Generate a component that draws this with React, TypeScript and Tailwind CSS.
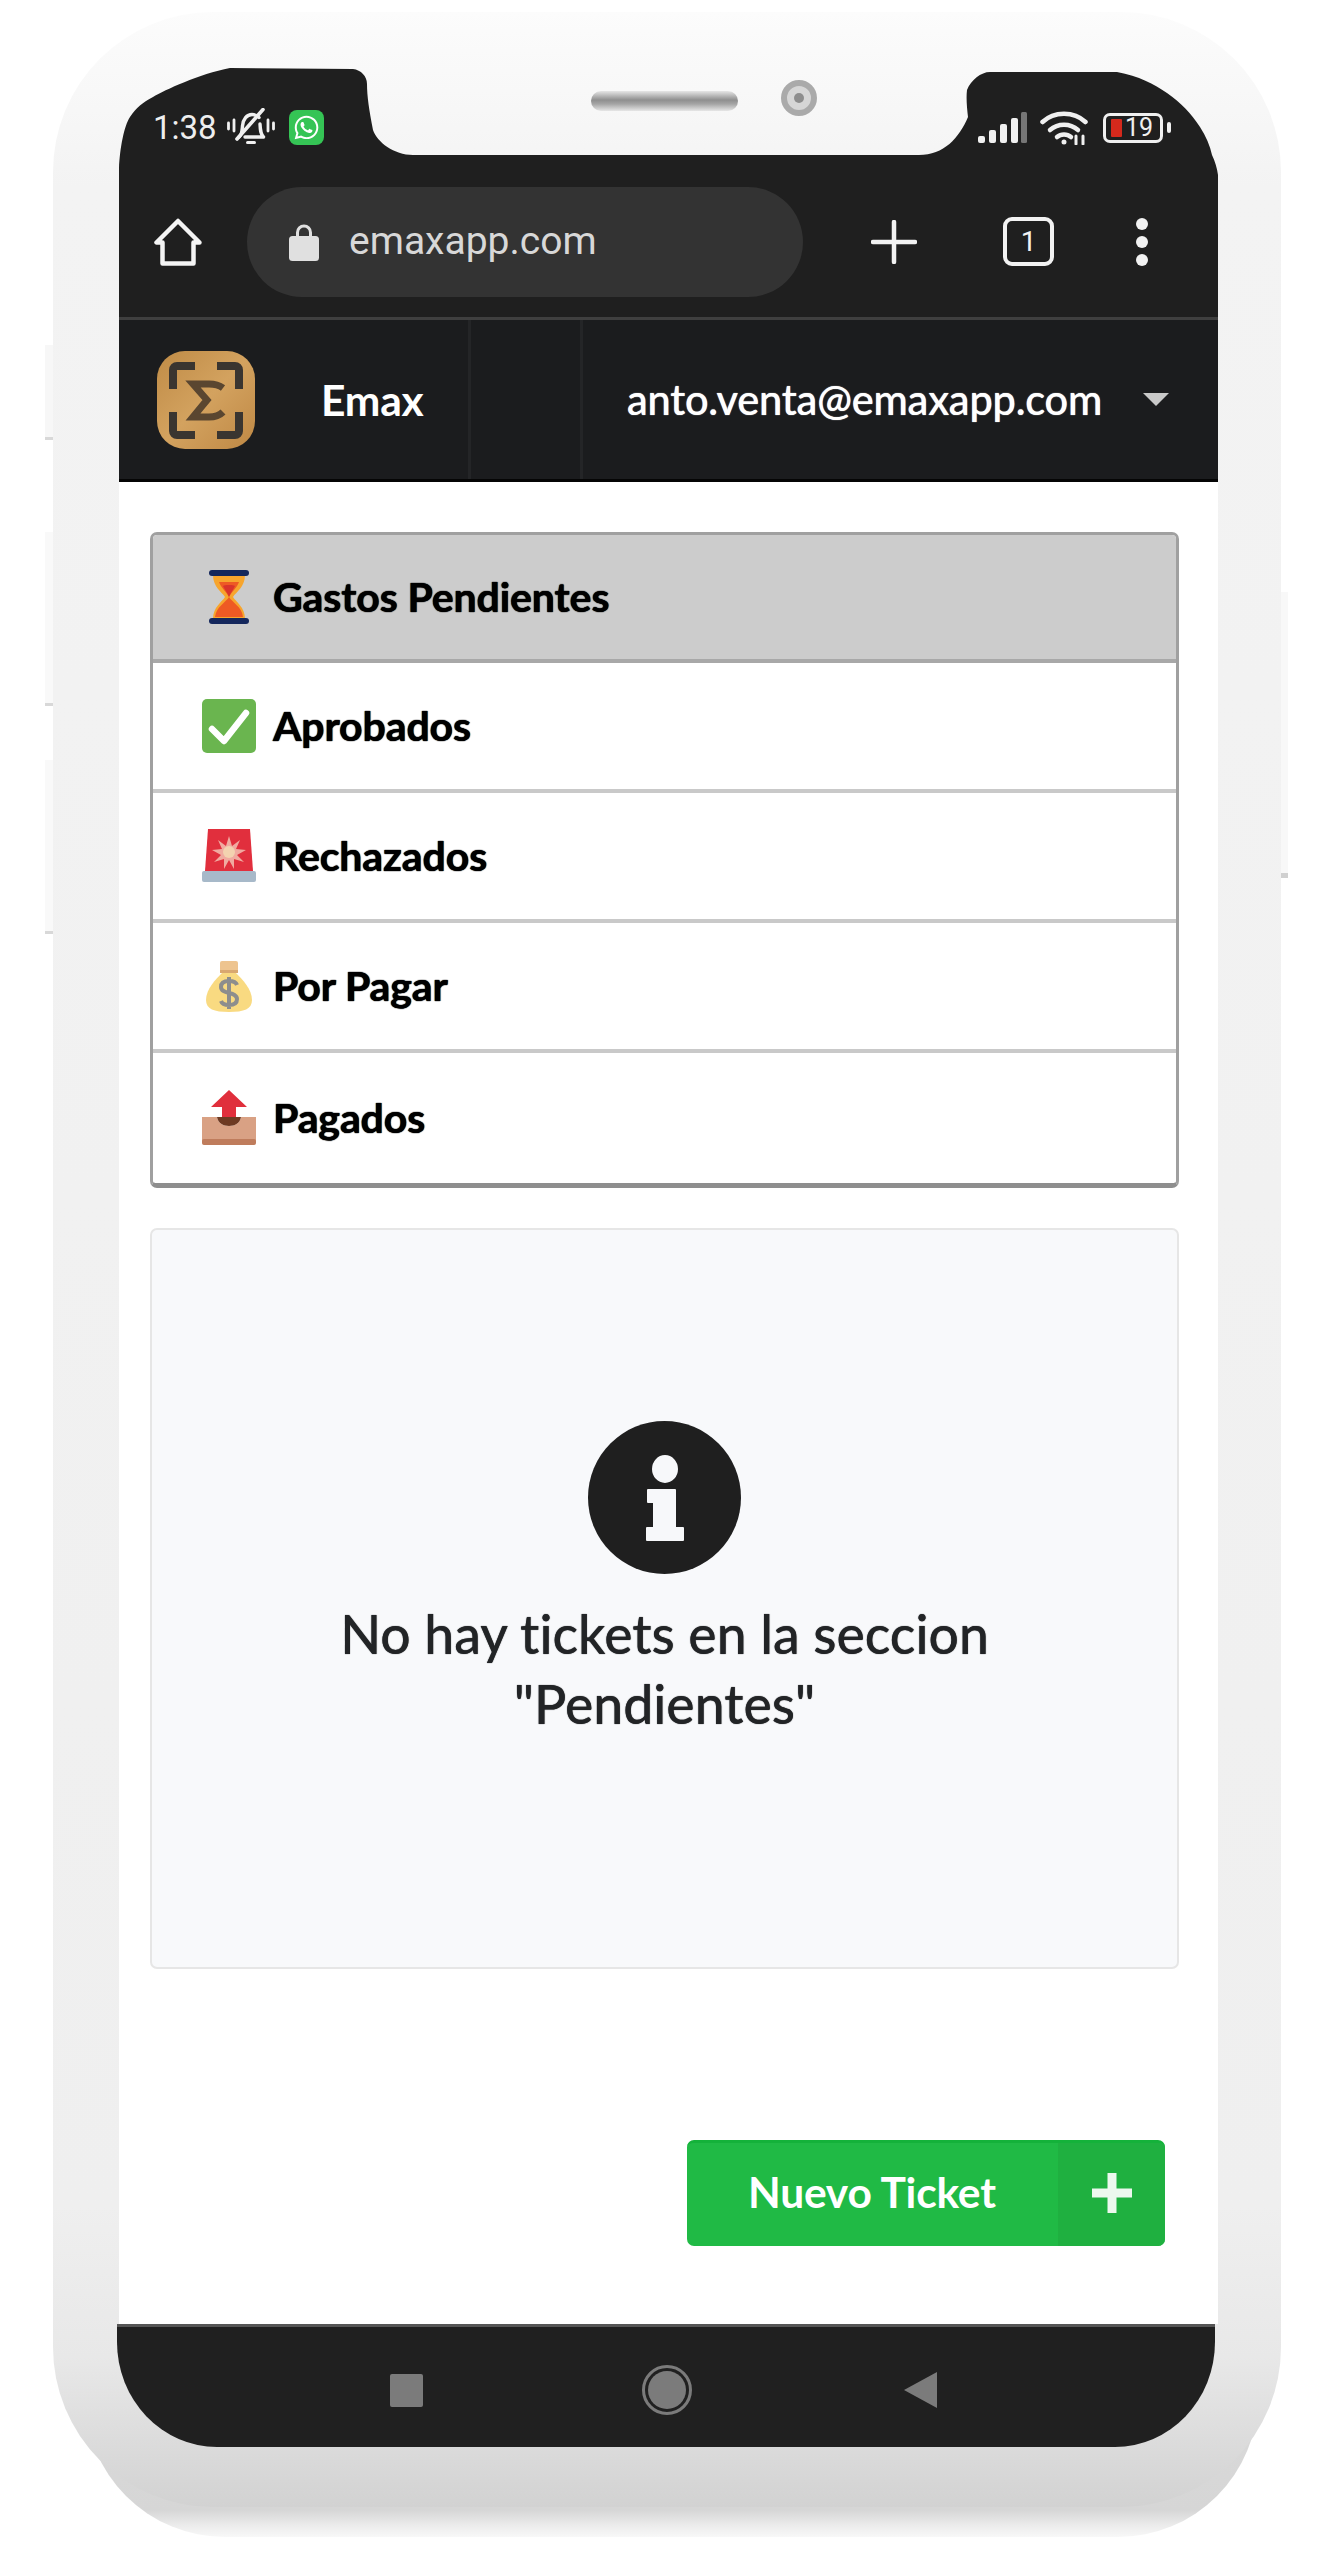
import React from "react";
import { FaWhatsapp } from "react-icons/fa";

function MutedBell() {
  return (
    <svg viewBox="0 0 48 38" className="w-[48px] h-[38px]" fill="none" stroke="#f0f0f0" strokeWidth="3.4" strokeLinecap="round" strokeLinejoin="round">
      <path d="M1.500 15v6M7 12v11M41 12v11M46.500 15v6" strokeWidth="2.800" />
      <path d="M12 29c3-2 3-6 3.500-11C16 11 20 6.500 25 6.500c3 0 5.500 1.200 7 3" />
      <path d="M33 16c.3 6 .5 10 3.500 13H18" />
      <path d="M10 31 36 1.500" strokeWidth="3.600" />
      <path d="M20.500 34.500h7" strokeWidth="3" />
    </svg>
  );
}

function Signal() {
  return (
    <svg viewBox="0 0 50 31" className="w-[50px] h-[31px]">
      <rect x="0" y="24" width="7" height="7" rx="2" fill="#f0f0f0" />
      <rect x="11" y="18" width="7" height="13" rx="2" fill="#f0f0f0" />
      <rect x="22" y="12" width="7" height="19" rx="2" fill="#f0f0f0" />
      <rect x="33" y="6" width="7" height="25" rx="2" fill="#f0f0f0" />
      <rect x="43" y="0" width="6" height="31" rx="1.500" fill="#767676" />
    </svg>
  );
}

function Wifi() {
  return (
    <svg viewBox="0 0 48 34" className="w-[48px] h-[34px]" fill="none" stroke="#f0f0f0" strokeWidth="4.500" strokeLinecap="round">
      <path d="M2.500 11C14 0 34 0 45.500 11" />
      <path d="M10 19c8-7 20-7 28 0" />
      <path d="M17 26c4-3.500 10-3.500 14 0" />
      <circle cx="24" cy="31" r="1.500" fill="#f0f0f0" strokeWidth="2" />
      <path d="M36 25v8M43 25v8" strokeWidth="3" />
    </svg>
  );
}

function Battery() {
  return (
    <div className="flex items-center">
      <div className="flex items-center w-[60px] h-[30px] rounded-[7px] border-[3px] border-[#f0f0f0] pl-[5px]">
        <div className="w-[11px] h-[18px] bg-[#d5291c] rounded-[1px]" />
        <span className="ml-[3px] font-['Roboto',sans-serif] text-[25px] leading-none text-[#efefef]">19</span>
      </div>
      <div className="ml-[4px] w-[4px] h-[11px] rounded-[2px] bg-[#f0f0f0]" />
    </div>
  );
}

function Home() {
  return (
    <svg viewBox="0 0 48 48" className="w-[48px] h-[48px]" fill="none" stroke="#f4f4f4" strokeWidth="4.500" strokeLinejoin="round">
      <path d="M24 3 2.500 24.500H8.500V45.500H39.500V24.500H45.500Z" />
    </svg>
  );
}

function Lock() {
  return (
    <svg viewBox="0 0 30 38" className="w-[30px] h-[38px]">
      <path d="M8.500 14V9.500a6.500 6.500 0 0 1 13 0V14" fill="none" stroke="#e0e0e0" strokeWidth="3" />
      <rect x="0" y="13" width="30" height="25" rx="3.500" fill="#e0e0e0" />
    </svg>
  );
}

function Plus() {
  return (
    <svg viewBox="0 0 46 44" className="w-[46px] h-[44px]" stroke="#f2f2f2" strokeWidth="4.500" strokeLinecap="round">
      <path d="M23 2v40M2 22h42" />
    </svg>
  );
}

function Logo() {
  return (
    <svg viewBox="0 0 98 98" className="w-[98px] h-[98px]">
      <defs>
        <linearGradient id="wood" x1="0" y1="0" x2="1" y2="1">
          <stop offset="0" stopColor="#bf8b46" />
          <stop offset="0.5" stopColor="#d3a25f" />
          <stop offset="1" stopColor="#bf8844" />
        </linearGradient>
      </defs>
      <rect x="0" y="0" width="98" height="98" rx="28" fill="url(#wood)" />
      <g fill="none" stroke="#3a3530" strokeWidth="8" strokeLinejoin="round">
        <path d="M16 38V19a4 4 0 0 1 4-4h18" />
        <path d="M60 15h18a4 4 0 0 1 4 4v19" />
        <path d="M16 61v19a4 4 0 0 0 4 4h18" />
        <path d="M82 61v19a4 4 0 0 1-4 4H60" />
      </g>
      <path d="M66 37c-4-3-8-4-14-4H36l14 16-14 17h16c6 0 11-2 14-5" fill="none" stroke="#5a4630" strokeWidth="7" />
    </svg>
  );
}

function Hourglass() {
  return (
    <svg viewBox="0 0 54 56" className="w-[54px] h-[56px]">
      <path d="M11 6h32c0 12-9 17-12 22 3 5 12 10 12 22H11c0-12 9-17 12-22-3-5-12-10-12-22Z" fill="#f7a52d" />
      <path d="M17 13h20c-2 6-7 9-10 15 3 5 13 10 14 20H13c1-10 11-15 14-20-3-6-8-9-10-15Z" fill="#ee5a24" />
      <path d="M27 16c3 0 5 0 6 1-2 4-4 6-6 11-2-5-4-7-6-11 1-1 3-1 6-1Z" fill="#d9342b" />
      <rect x="7" y="1" width="40" height="6" rx="3" fill="#14275c" />
      <rect x="7" y="49" width="40" height="6" rx="3" fill="#14275c" />
    </svg>
  );
}

function Check() {
  return (
    <svg viewBox="0 0 54 54" className="w-[54px] h-[54px]">
      <rect x="0" y="0" width="54" height="54" rx="5" fill="#6ab54f" />
      <path d="M10 30 22 42 44 14" fill="none" stroke="#fff" strokeWidth="6.500" strokeLinecap="round" strokeLinejoin="round" />
    </svg>
  );
}

function Siren() {
  return (
    <svg viewBox="0 0 54 54" className="w-[54px] h-[54px]">
      <path d="M6 0h42l3 42H3Z" fill="#e12f3d" />
      <path d="M27 7l3 10 8-6-4 9 10 1-9 5 7 7-10-3 0 10-5-9-5 9 0-10-10 3 7-7-9-5 10-1-4-9 8 6Z" fill="#f0aaa0" />
      <circle cx="27" cy="23" r="6" fill="#f3d2b0" />
      <rect x="0" y="42" width="54" height="11" rx="2" fill="#a7b9c9" />
    </svg>
  );
}

function MoneyBag() {
  return (
    <svg viewBox="0 0 54 54" className="w-[54px] h-[54px]">
      <path d="M20 14C14 20 4 30 4 41c0 9 8 12 23 12s23-3 23-12c0-11-10-21-16-27Z" fill="#f9da81" />
      <rect x="18" y="2" width="18" height="11" rx="2" fill="#eec48f" />
      <rect x="18" y="11" width="18" height="3" fill="#d9a870" />
      <path d="M35 26c-1-3-4-4-8-4-5 0-8 2-8 6 0 8 16 4 16 12 0 4-3 6-8 6-4 0-7-1-8-4M27 18v32" fill="none" stroke="#8d8d8d" strokeWidth="4" />
    </svg>
  );
}

function Outbox() {
  return (
    <svg viewBox="0 0 54 56" className="w-[54px] h-[56px]">
      <path d="M27 0 45 17H34V28H20V17H9Z" fill="#e02f3c" />
      <path d="M0 27h15c1 6 6 9 12 9s11-3 12-9h15v24a4 4 0 0 1-4 4H4a4 4 0 0 1-4-4Z" fill="#d9a184" />
      <path d="M15 27h24c-1 6-6 9-12 9s-11-3-12-9Z" fill="#6e3a22" />
      <rect x="0" y="49" width="54" height="6" rx="2" fill="#bf7c5c" />
    </svg>
  );
}

const rows = [
  { label: "Aprobados", icon: <Check />, ml: "" },
  { label: "Rechazados", icon: <Siren />, ml: "ml-[1px]" },
  { label: "Por Pagar", icon: <MoneyBag />, ml: "ml-[1px]" },
  { label: "Pagados", icon: <Outbox />, ml: "ml-[1px]" },
];

const rowText = "font-['Lato',sans-serif] font-bold text-[41px] tracking-[-0.1px] text-black [text-shadow:0_0_1px_#000,0_0_1px_#000]";

export default function App() {
  return (
    <div className="relative isolate w-[1333px] h-[2555px] bg-white overflow-hidden pt-[12px] pl-[53px]">
      <div className="relative w-[1228px] h-[2495px]">
        {/* shadow and side keys */}
        <div className="absolute -z-10 left-[32px] right-[23px] top-[2300px] h-[225px] rounded-b-[140px] bg-[linear-gradient(180deg,#dcdcdc_0%,#d6d6d6_88%,#ececec_95%,#f8f8f8_100%)]" />
        <div className="absolute -z-10 left-[-8px] top-[333px] w-[10px] h-[95px] bg-[#f7f7f7] border-b-[3px] border-[#d8d8d8]" />
        <div className="absolute -z-10 left-[-8px] top-[520px] w-[10px] h-[174px] bg-[#f9f9f9] border-b-[3px] border-[#d8d8d8]" />
        <div className="absolute -z-10 left-[-8px] top-[748px] w-[10px] h-[174px] bg-[#f9f9f9] border-b-[3px] border-[#d8d8d8]" />
        <div className="absolute -z-10 right-[-7px] top-[580px] w-[9px] h-[286px] bg-[#f8f8f8] border-b-[5px] border-[#d0d0d0]" />

        {/* phone body */}
        <div className="h-full rounded-[160px] bg-[linear-gradient(180deg,#fcfcfc_0%,#f3f3f3_7%,#efefef_88%,#e8e8e8_94%,#d2d2d2_100%)] pt-[56px] pl-[66px] pr-[63px] pb-[60px]">
          <div className="flex flex-col h-full">
            {/* status bar with notch */}
            <div className="relative flex items-start h-[107px] shrink-0">
              <svg viewBox="0 0 1099 107" className="absolute inset-0 w-full h-full">
                <path
                  d="M0 107L0 100C1 80 5 58 11 49C17 40 24 34 34 29C46 22 80 6 111 0L234 1C242 2 248 8 248 16C248 28 250 42 254 62C258 74 275 87 294 87L800 87C825 87 840 70 849 49C848 40 847 30 848 22C852 12 862 4 871 4L998 4C1020 8 1035 16 1048 25C1062 35 1072 45 1081 59C1087 68 1091 78 1093 87C1096 93 1098 100 1099 107Z"
                  fill="#1f1f1f"
                />
              </svg>
              <div className="relative flex items-center pl-[34px] mt-[41px] h-[36px]">
                <span className="font-['Roboto',sans-serif] text-[33px] leading-none text-[#eeeeee] w-[70px]">1:38</span>
                <div className="ml-[4px]"><MutedBell /></div>
                <div className="ml-[14px] flex items-center justify-center w-[35px] h-[35px] rounded-[8px] bg-[#35c455] text-white">
                  <FaWhatsapp className="w-[27px] h-[27px]" />
                </div>
              </div>
              <div className="relative ml-[267px] mt-[23px] w-[147px] h-[20px] rounded-full bg-[linear-gradient(180deg,#e6e6e6_0%,#8f8f8f_45%,#a5a5a5_65%,#e6e6e6_100%)]" />
              <div className="relative ml-[43px] mt-[12px] w-[36px] h-[36px] rounded-full bg-[#d6d6d6] border-[6px] border-[#aaaaaa] flex items-center justify-center">
                <div className="w-[10px] h-[10px] rounded-full bg-[#8d8d8d]" />
              </div>
              <div className="relative ml-auto flex items-end pr-[47px] mt-[44px] h-[31px]">
                <Signal />
                <div className="ml-[12px] -mb-[2px]"><Wifi /></div>
                <div className="ml-[15px] self-center"><Battery /></div>
              </div>
            </div>

            {/* browser bar */}
            <div className="flex items-center h-[145px] shrink-0 bg-[#1f1f1f] border-b-[3px] border-[#3f3f3f] pb-[9px] pl-[35px]">
              <Home />
              <div className="ml-[45px] flex items-center w-[556px] h-[110px] rounded-[55px] bg-[#333333] pl-[42px]">
                <Lock />
                <span className="ml-[30px] font-['Roboto',sans-serif] text-[39px] leading-none text-[#d8d8d8]">emaxapp.com</span>
              </div>
              <div className="ml-[68px]"><Plus /></div>
              <div className="ml-[86px] flex items-center justify-center w-[51px] h-[49px] rounded-[9px] border-[4px] border-[#f2f2f2] font-['Roboto',sans-serif] text-[28px] leading-none text-[#f2f2f2]">1</div>
              <div className="ml-[82px] flex flex-col gap-[6px]">
                <div className="w-[12px] h-[12px] rounded-full bg-[#f2f2f2]" />
                <div className="w-[12px] h-[12px] rounded-full bg-[#f2f2f2]" />
                <div className="w-[12px] h-[12px] rounded-full bg-[#f2f2f2]" />
              </div>
            </div>

            {/* app nav */}
            <div className="flex h-[162px] shrink-0 bg-[#1b1c1e] border-b-[3px] border-[#050505]">
              <div className="flex items-center w-[352px] pl-[38px] border-r-[3px] border-[#242527]">
                <Logo />
                <span className="ml-[66px] font-['Lato',sans-serif] font-bold text-[42.500px] text-white tracking-[-0.2px]">Emax</span>
              </div>
              <div className="w-[112px] border-r-[3px] border-[#242527]" />
              <div className="flex items-center pl-[44px]">
                <span className="font-['Lato',sans-serif] font-medium text-[41.500px] text-white tracking-[-0.2px] [text-shadow:0_0_1px_#fff]">anto.venta@emaxapp.com</span>
                <div className="ml-[41px] w-0 h-0 border-l-[13px] border-r-[13px] border-t-[13px] border-l-transparent border-r-transparent border-t-[#c9c9c9]" />
              </div>
            </div>

            {/* content */}
            <div className="flex-1 flex flex-col bg-white pt-[50px] pl-[31px] pr-[39px]">
              <div className="rounded-[7px] border-[3px] border-[#a0a0a0] border-b-[5px] border-b-[#8e8e8e] bg-white overflow-hidden">
                <div className="flex items-center h-[128px] bg-[#cccccc] border-b-[4px] border-[#a8a8a8] pl-[49px]">
                  <Hourglass />
                  <span className={`ml-[17px] ${rowText}`}>Gastos Pendientes</span>
                </div>
                {rows.map((r, i) => (
                  <div
                    key={r.label}
                    className={`flex items-center h-[130px] pl-[49px] ${i < rows.length - 1 ? "border-b-[4px] border-[#c9c9c9]" : ""}`}
                  >
                    {r.icon}
                    <span className={`ml-[17px] ${r.ml} ${rowText}`}>{r.label}</span>
                  </div>
                ))}
              </div>

              <div className="mt-[40px] flex flex-col items-center h-[741px] rounded-[7px] border-2 border-[#e6e6e6] bg-[#f8f9fb] pt-[191px]">
                <div className="flex items-center justify-center w-[153px] h-[153px] rounded-full bg-[#1f1f1f]">
                  <svg viewBox="0 0 40 86" className="w-[40px] h-[86px]" fill="#f7f8fa" stroke="#f7f8fa" strokeWidth="2" strokeLinejoin="round">
                    <ellipse cx="20" cy="14" rx="12" ry="13" />
                    <path d="M3 35H30V73H38V85H2V73H9V47H3Z" />
                  </svg>
                </div>
                <p className="mt-[24px] w-[720px] text-center font-['Lato',sans-serif] font-medium text-[53.500px] leading-[70px] text-[#222426] [font-variant-ligatures:none] [text-shadow:0_0_1px_#222426]">
                  No hay tickets en la seccion "Pendientes"
                </p>
              </div>

              <div className="self-end mr-[14px] mt-[171px] flex h-[106px] w-[478px] rounded-[7px] overflow-hidden border-t-[3px] border-[#14b23a] bg-[#20ba45]">
                <div className="flex items-center w-[371px] pl-[61px] pb-[5px]">
                  <span className="font-['Lato',sans-serif] font-bold text-[42.500px] text-white tracking-[-0.2px]">Nuevo Ticket</span>
                </div>
                <div className="flex-1 flex items-center justify-center bg-[#1fb040] pb-[3px]">
                  <svg viewBox="0 0 40 40" className="w-[40px] h-[40px]" stroke="#ecf8ee" strokeWidth="9">
                    <path d="M20 0v40M0 20h40" />
                  </svg>
                </div>
              </div>
            </div>

            {/* android nav */}
            <div className="flex items-center h-[123px] shrink-0 -ml-[2px] mr-[3px] bg-[#202020] border-t-[3px] border-[#555555] rounded-b-[100px_105px] pt-[6px] pl-[273px]">
              <div className="w-[33px] h-[33px] rounded-[2px] bg-[#7b7b7b]" />
              <div className="ml-[219px] flex items-center justify-center w-[50px] h-[50px] rounded-full border-[3px] border-[#7b7b7b]">
                <div className="w-[38px] h-[38px] rounded-full bg-[#7b7b7b]" />
              </div>
              <svg viewBox="0 0 33 36" className="ml-[212px] w-[33px] h-[36px]">
                <path d="M33 0V36L0 18Z" fill="#7b7b7b" />
              </svg>
            </div>
          </div>
        </div>
      </div>
    </div>
  );
}
